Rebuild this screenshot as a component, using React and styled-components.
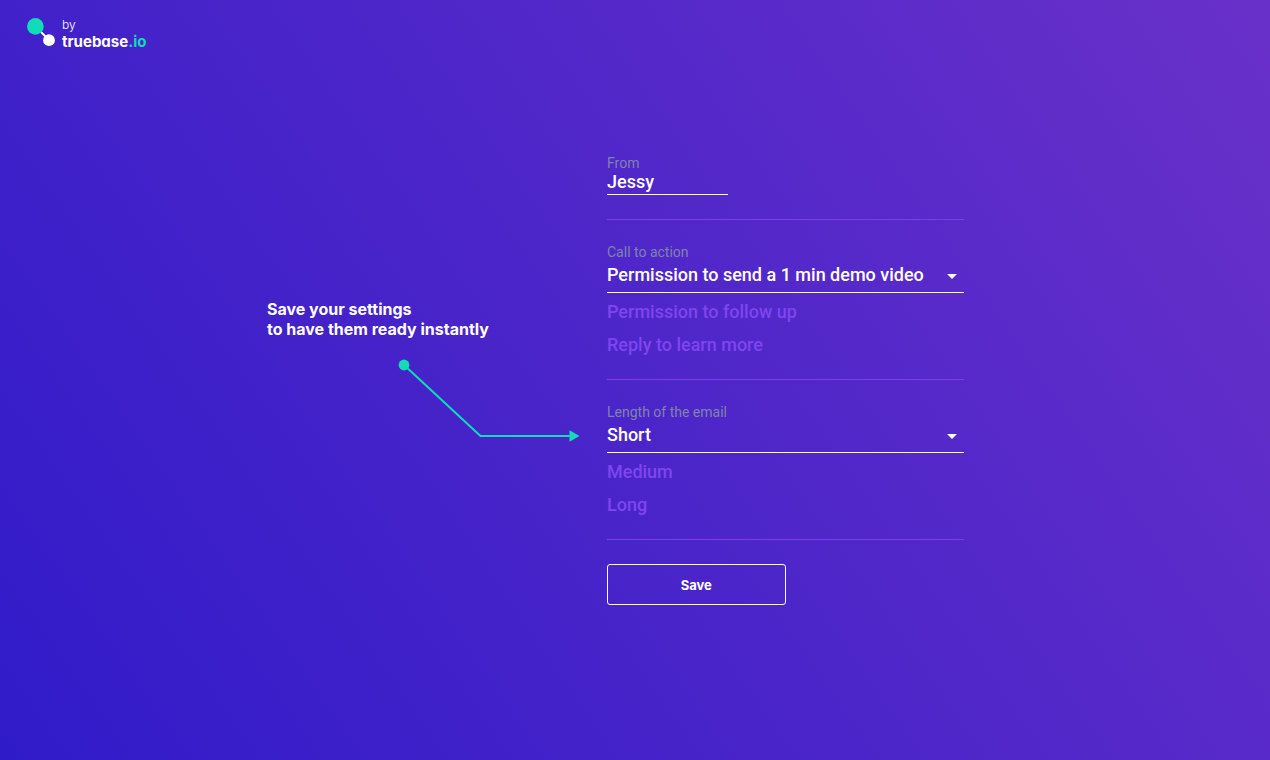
import React, { useState } from "react";
import styled, { createGlobalStyle } from "styled-components";

const GlobalStyle = createGlobalStyle`
  *, *::before, *::after { box-sizing: border-box; }
  body { margin: 0; background: #301cc9; color: #fff; font-family: Roboto, sans-serif; }
`;

const Page = styled.div`
  min-height: 100vh;
  background: linear-gradient(55deg, #301bc9, #6930c9);
`;

const Header = styled.header`
  display: flex;
  padding: 16px 26px;
`;

const Brand = styled.a`
  display: flex;
  gap: 6px;
  color: #fff;
  text-decoration: none;
  font-family: Inter, sans-serif;
  font-size: 15px;
  line-height: 16px;
`;

const BrandText = styled.span`
  display: flex;
  flex-direction: column;
  gap: 1px;
  padding-top: 1px;
  font-weight: 700;
  font-feature-settings: "cv11";
`;

const By = styled.span`
  font-size: 12px;
  font-weight: 300;
`;

const Accent = styled.span`
  color: #10dcb8;
`;

const Main = styled.main`
  display: grid;
  grid-template-columns: 340px minmax(0, 357px);
  max-width: 736px;
  margin: 0 auto;
  padding: 89px 0 40px;
`;

const Callout = styled.aside`
  padding-top: 144px;
`;

const CalloutText = styled.p`
  margin: 0 0 19px;
  font-family: Inter, sans-serif;
  font-size: 16px;
  font-weight: 700;
  line-height: 20px;
`;

const Arrow = styled.svg`
  display: block;
  margin-left: 131px;
`;

const Form = styled.form`
  display: flex;
  flex-direction: column;
`;

const Section = styled.section`
  display: flex;
  flex-direction: column;
  align-items: flex-start;
  padding-bottom: 24px;
  margin-bottom: 24px;
  border-bottom: 1px solid #7c3eea;
`;

const Label = styled.label`
  color: #8083ab;
  font-size: 14px;
  line-height: 16px;
`;

const NameInput = styled.input`
  width: 121px;
  height: 24px;
  padding: 0 0 2px;
  border: 0;
  border-bottom: 1px solid #fff;
  border-radius: 0;
  outline: none;
  background: transparent;
  color: #fff;
  font: 500 18px Roboto, sans-serif;
`;

const SelectBox = styled.div`
  display: grid;
  width: 100%;
  align-items: center;
  margin-bottom: 8px;
  border-bottom: 1px solid #fff;
`;

const Select = styled.select`
  grid-area: 1 / 1;
  width: 100%;
  height: 32px;
  padding: 0 28px 4px 0;
  border: 0;
  outline: none;
  appearance: none;
  background: transparent;
  color: #fff;
  font: 500 18px Roboto, sans-serif;

  option { color: #301cc9; }
`;

const Caret = styled.svg`
  grid-area: 1 / 1;
  justify-self: end;
  margin-right: 7px;
  pointer-events: none;
`;

const Choices = styled.div`
  display: flex;
  flex-direction: column;
  align-items: flex-start;
  gap: 12px;
`;

const Choice = styled.button`
  padding: 0;
  border: 0;
  background: transparent;
  color: #7f45f0;
  font: 500 18px/21px Roboto, sans-serif;
  text-align: left;
  cursor: pointer;
`;

const SaveButton = styled.button`
  width: 50%;
  height: 41px;
  border: 1px solid #fff;
  border-radius: 3px;
  background: transparent;
  color: #fff;
  font: 700 13px Inter, sans-serif;
  cursor: pointer;
`;

function ChoiceField({ id, label, options }) {
  const [value, setValue] = useState(options[0]);
  return (
    <Section>
      <Label htmlFor={id}>{label}</Label>
      <SelectBox>
        <Select id={id} value={value} onChange={(e) => setValue(e.target.value)}>
          {options.map((o) => (
            <option key={o}>{o}</option>
          ))}
        </Select>
        <Caret width="10" height="5" viewBox="0 0 10 5" aria-hidden="true">
          <path d="M0 0h10L5 5z" fill="#fff" />
        </Caret>
      </SelectBox>
      <Choices>
        {options
          .filter((o) => o !== value)
          .map((o) => (
            <Choice key={o} type="button" onClick={() => setValue(o)}>
              {o}
            </Choice>
          ))}
      </Choices>
    </Section>
  );
}

export default function App() {
  return (
    <Page>
      <GlobalStyle />
      <Header>
        <Brand href="#">
          <svg width="30" height="32" viewBox="0 0 30 32" aria-hidden="true">
            <path d="M9 10l14 14" stroke="#fff" strokeWidth="2" />
            <circle cx="9.4" cy="10.4" r="8.3" fill="#10dcb8" />
            <circle cx="23" cy="24.2" r="5.9" fill="#fff" />
          </svg>
          <BrandText>
            <By>by</By>
            <span>
              truebase<Accent>.io</Accent>
            </span>
          </BrandText>
        </Brand>
      </Header>
      <Main>
        <Callout>
          <CalloutText>
            Save your settings
            <br />
            to have them ready instantly
          </CalloutText>
          <Arrow width="182" height="84" viewBox="0 0 182 84" fill="none" aria-hidden="true">
            <path d="M6 7L82.500 78H172" stroke="#10dcb8" strokeWidth="2" />
            <circle cx="6" cy="7" r="5.400" fill="#10dcb8" />
            <path d="M171.500 72.200v11.600l10-5.800z" fill="#10dcb8" />
          </Arrow>
        </Callout>
        <Form onSubmit={(e) => e.preventDefault()}>
          <Section>
            <Label htmlFor="from">From</Label>
            <NameInput id="from" type="text" defaultValue="Jessy" />
          </Section>
          <ChoiceField
            id="cta"
            label="Call to action"
            options={["Permission to send a 1 min demo video", "Permission to follow up", "Reply to learn more"]}
          />
          <ChoiceField id="length" label="Length of the email" options={["Short", "Medium", "Long"]} />
          <SaveButton type="submit">Save</SaveButton>
        </Form>
      </Main>
    </Page>
  );
}
